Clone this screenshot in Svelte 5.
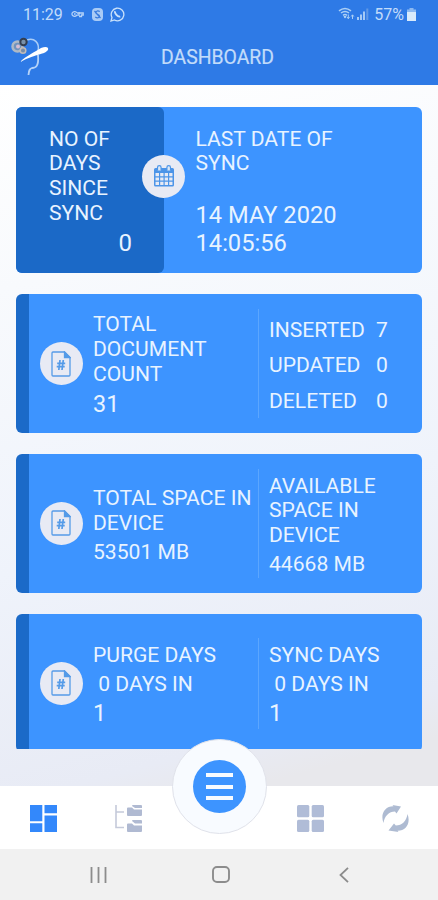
<script>
    const cards = [
        {
            left: { title: ["TOTAL", "DOCUMENT", "COUNT"], big: "31" },
            rows: [
                ["INSERTED", 7],
                ["UPDATED", 0],
                ["DELETED", 0]
            ]
        },
        {
            left: { title: ["TOTAL SPACE IN", "DEVICE"], value: "53501 MB" },
            right: { title: ["AVAILABLE", "SPACE IN", "DEVICE"], value: "44668 MB" }
        },
        {
            left: { title: ["PURGE DAYS"], value: "\u00a00 DAYS IN", big: "1" },
            right: { title: ["SYNC DAYS"], value: "\u00a00 DAYS IN", big: "1" }
        }
    ];
</script>

{#snippet stat(s)}
    <div class="stat">
        {#each s.title as line}
            <div class="line">{line}</div>
        {/each}
        {#if s.value}
            <div class="value">{s.value}</div>
        {/if}
        {#if s.big}
            <div class="big">{s.big}</div>
        {/if}
    </div>
{/snippet}

<div class="phone">
    <header>
        <div class="status">
            <span class="time">11:29</span>
            <!-- vpn key -->
            <svg width="13" height="8" viewBox="0 0 13 8" fill="none" stroke="#b5d3f8" stroke-width="1.3">
                <path d="M5.8 2.8A2.6 2.4 0 1 0 5.8 5.2H8V3H12.2V5H10.5V6.5H8" />
                <path d="M3 4h1.6M6 3h3" />
            </svg>
            <svg class="shield" width="13" height="15" viewBox="0 0 13 15">
                <rect x="1" y="1" width="11" height="13" rx="4" fill="#a9cbf6" />
                <path d="M8.8 4.5C6 3 4 5 5.2 6.5l2.8 1.7C9.5 10 7 11.8 4.2 10M3.5 4l6 7" fill="none" stroke="#3679dd" stroke-width="1.2" />
            </svg>
            <svg class="chat" width="15" height="15" viewBox="0 0 15 15" fill="none" stroke="#c9e1fb">
                <path d="M1 14l1-3.5A6.3 6.3 0 1 1 4.5 13z" stroke-width="1.3" />
                <path d="M5.2 4.2c-1 1.600 2.600 6.300 5 5.200" stroke-width="1.9" />
            </svg>
            <span class="right">
                <svg width="17" height="14" viewBox="0 0 17 14" fill="none" stroke="#acd0f5" stroke-width="1.5">
                    <path d="M1 3.8Q7 -1 13 3.800M3 6Q7 3 11 6M5 8.300Q7 6.800 9 8.300" />
                    <path d="M6 9.500h2l-1 1.600zM10.300 11.500V7.500M9 10l1.300 1.700L11.500 10M14.500 12V8M13.200 9.500l1.300-1.700 1.300 1.700" stroke-width="1" />
                </svg>
                <svg width="12" height="12" viewBox="0 0 12 12">
                    <path d="M0 9h2v3H0zM3 6.500h2V12H3zM6 3.500h2V12H6z" fill="#a5caf5" />
                    <path d="M9.300 0.500h2V12h-2z" fill="#6099e6" />
                </svg>
                <span class="percent">57%</span>
                <svg class="battery" width="9" height="13" viewBox="0 0 9 13">
                    <path d="M2.500 0h4v1.500H9V4H0V1.500h2.500z" fill="#8db9f1" />
                    <path d="M0 4h9v9H0z" fill="#d9eafb" />
                </svg>
            </span>
        </div>
        <div class="titlebar">
            <svg class="logo" width="40" height="40" viewBox="0 0 40 40" fill="none">
                <path d="M16 4C23 1 29 7 27 15" stroke="#a9cdf7" stroke-width="1.5" />
                <path d="M27 19C28 30 25 32 21 32C18 33 18 35 17.500 39" stroke="#b5d3f8" stroke-width="1.8" />
                <path d="M9 26C15 20 24 16 30 12C35 10 38 11 37 14C33 19 27 17 9 26Z" fill="#fff" />
                <circle cx="6.5" cy="10.5" r="5" fill="#7193bd" stroke="#aeb9c6" stroke-width="2.5" />
                <circle cx="7" cy="10.5" r="2" fill="#d9bed2" />
                <circle cx="12.500" cy="6" r="3.2" fill="#7891a9" stroke="#333e50" stroke-width="2" />
                <circle cx="12" cy="14.500" r="2.8" fill="#798da7" stroke="#c3bdb9" stroke-width="1.5" />
            </svg>
            <h1>DASHBOARD</h1>
        </div>
    </header>

    <main>
        <div class="list">
            <section class="sync">
                <div class="days">
                    <div class="line">NO OF</div>
                    <div class="line">DAYS</div>
                    <div class="line">SINCE</div>
                    <div class="line">SYNC</div>
                    <div class="count">0</div>
                    <span class="badge calendar">
                        <svg width="22" height="22" viewBox="0 0 22 22">
                            <path d="M1 4.500a1.500 1.500 0 0 1 1.500-1.500h17A1.500 1.500 0 0 1 21 4.500V20a1.500 1.500 0 0 1-1.500 1.500h-17A1.500 1.500 0 0 1 1 20z" fill="#4c94e8" />
                            <path d="M2.500 8h3.500v3.200H2.500zM7.200 8h3.300v3.200H7.200zM11.700 8h3.300v3.200H11.700zM16.200 8h3.300v3.200H16.200zM2.500 12.400h3.500v3.200H2.500zM7.200 12.400h3.300v3.200H7.200zM11.700 12.400h3.300v3.200H11.700zM16.200 12.400h3.300v3.200H16.200zM2.500 16.800h3.500V20H2.500zM7.200 16.800h3.300V20H7.200zM11.700 16.800h3.300V20H11.700zM16.200 16.800h3.300V20H16.200z" fill="#e8eaf4" />
                            <path d="M4.500 5.500V2.500a1.800 1.800 0 0 1 3.600 0v3M13.900 5.500V2.500a1.800 1.800 0 0 1 3.600 0v3" fill="#dce8f6" stroke="#4c94e8" stroke-width="1.2" />
                        </svg>
                    </span>
                </div>
                <div class="date">
                    <div class="line">LAST DATE OF</div>
                    <div class="line">SYNC</div>
                    <div class="stamp">14 MAY 2020<br />14:05:56</div>
                </div>
            </section>

            {#each cards as card, i}
                <section class="card">
                    <span class="badge">
                        <svg width="20" height="26" viewBox="0 0 20 26" fill="none" stroke="#559be8" stroke-width="1.3">
                            <path d="M2 1H13.500L19 6.500V24a1 1 0 0 1-1 1H2a1 1 0 0 1-1-1V2a1 1 0 0 1 1-1z" />
                            <path d="M13.500 1v5.500H19z" fill="#559be8" />
                            <path d="M9 9L7.800 19M12.300 9L11 19M6.200 12.300h8M5.700 15.700h8" stroke-width="1.7" />
                        </svg>
                    </span>
                    {@render stat(card.left)}
                    <div class="divider" class:short={i === 2}></div>
                    {#if card.rows}
                        <div class="rows">
                            {#each card.rows as [name, n]}
                                <span>{name}</span><span>{n}</span>
                            {/each}
                        </div>
                    {:else}
                        {@render stat(card.right)}
                    {/if}
                </section>
            {/each}
        </div>
    </main>

    <nav>
        <svg width="27" height="27" viewBox="0 0 27 27" fill="#3388fb">
            <path d="M0 0h12.300v16.200H0zM14.500 0H27v8.300H14.500zM0 18.300h12.300V27H0zM14.500 10.500H27V27H14.500z" />
        </svg>
        <svg width="27" height="27" viewBox="0 0 27 27">
            <path d="M1 0v22.500h8M1 7h8" fill="none" stroke="#c5cada" stroke-width="1.6" />
            <path d="M12 3.500a1 1 0 0 1 1-1h4l2 2h8V10a1 1 0 0 1-1 1H13a1 1 0 0 1-1-1zM17 1a1 1 0 0 1 1-1h8a1 1 0 0 1 1 1v2h-7zM12 19.500a1 1 0 0 1 1-1h4l2 2h8V26a1 1 0 0 1-1 1H13a1 1 0 0 1-1-1zM17 16a1 1 0 0 1 1-1h8a1 1 0 0 1 1 1v2.500h-7z" fill="#b0bad2" />
        </svg>
        <button class="fab" aria-label="Menu">
            <span class="inner"><i></i><i></i><i></i></span>
        </button>
        <svg width="27" height="27" viewBox="0 0 27 27" fill="#b0bcd7">
            <rect width="12.3" height="12.3" rx="1.5" />
            <rect x="14.7" width="12.3" height="12.3" rx="1.5" />
            <rect y="14.7" width="12.3" height="12.3" rx="1.5" />
            <rect x="14.7" y="14.7" width="12.3" height="12.3" rx="1.5" />
        </svg>
        <svg width="27" height="27" viewBox="0 0 27 27" fill="#aebbd2">
            <path d="M1.500 18C-2 9 3 1 11.500 1.200L10.500 0L19 1.500L14.500 8.500L13 6.500C7 6.500 2.500 11 1.500 18Z" />
            <path d="M25.500 9C29 18 24 26 15.500 25.800L16.500 27L6.500 25.500L12 18.500L13.800 20.500C20 20.500 24.500 16 25.500 9Z" />
        </svg>
    </nav>

    <footer>
        <svg width="17" height="16" viewBox="0 0 17 16" stroke="#8c8c8c" stroke-width="1.8">
            <path d="M1.500 0v16M8.500 0v16M15.500 0v16" />
        </svg>
        <svg class="home" width="18" height="17" viewBox="0 0 18 17" fill="none" stroke="#8c8c8c" stroke-width="1.9">
            <rect x="1" y="1" width="16" height="15" rx="4" />
        </svg>
        <svg width="10" height="16" viewBox="0 0 10 16" fill="none" stroke="#8c8c8c" stroke-width="1.8">
            <path d="M9 0.800L1.500 8L9 15.200" />
        </svg>
    </footer>
</div>

<style>
    :global(body) {
        margin: 0;
    }
    .phone {
        display: flex;
        flex-direction: column;
        width: 438px;
        height: 900px;
        overflow: hidden;
        font-family: Roboto, sans-serif;
        color: #e8f3ff;
        background: #fff;
    }
    svg {
        display: block;
        flex: none;
    }
    header {
        height: 85px;
        flex: none;
        background: #2e7ae6;
        color: #c2dcfa;
    }
    .status {
        display: flex;
        align-items: center;
        height: 28px;
        padding: 0 22px 0 23px;
        font-size: 16px;
    }
    .time {
        width: 48px;
    }
    .shield {
        margin-left: 7px;
    }
    .chat {
        margin-left: 6px;
    }
    .right {
        display: flex;
        align-items: center;
        margin-left: auto;
    }
    .right svg + svg {
        margin-left: 2px;
    }
    .percent {
        margin: 0 3px 0 5px;
        font-size: 16px;
    }
    .titlebar {
        display: grid;
        grid-template-columns: 1fr auto 1fr;
        align-items: center;
        height: 57px;
    }
    .logo {
        margin: 0 0 3px 11px;
    }
    h1 {
        margin: 1px 3px 0 0;
        font-size: 19.4px;
        font-weight: 400;
        line-height: 57px;
        -webkit-text-stroke: 0.2px #c2dcfa;
    }
    main {
        height: 701px;
        flex: none;
        overflow: hidden;
        background: linear-gradient(165deg, #fff 0%, #f8fafd 25%, #eff3fb 60%, #e8ebf5 88%, #e8e8ec 94%);
    }
    .list {
        display: flex;
        flex-direction: column;
        gap: 21.3px;
        height: 642px;
        padding: 22px 16px 0;
        overflow: hidden;
    }
    .sync {
        display: flex;
        flex: none;
        height: 166px;
        border-radius: 6px;
        background: #3d94ff;
    }
    .days {
        position: relative;
        box-sizing: border-box;
        width: 148px;
        padding: 19.5px 32px 0 33px;
        border-radius: 6px;
        background: #1b69c7;
    }
    .line {
        font-size: 21.1px;
        line-height: 24.7px;
        white-space: nowrap;
    }
    .count {
        font-size: 24px;
        line-height: 28px;
        margin-top: 4px;
        text-align: right;
    }
    .date {
        padding: 19.5px 0 0 31.5px;
    }
    .stamp {
        margin-top: 26.5px;
        font-size: 23.7px;
        line-height: 27.7px;
    }
    .badge {
        display: flex;
        align-items: center;
        justify-content: center;
        flex: none;
        width: 43px;
        height: 43px;
        border-radius: 50%;
        background: #e8eaf4;
    }
    .calendar {
        position: absolute;
        top: 47.5px;
        right: -21px;
    }
    .card {
        display: grid;
        grid-template-columns: 43px 175px 1px 1fr;
        align-items: center;
        flex: none;
        box-sizing: border-box;
        height: 138.5px;
        padding-left: 10.5px;
        border-left: 13px solid #1b6ac8;
        border-radius: 6px;
        background: #3d94ff;
    }
    .stat {
        padding: 3px 0 0 10.5px;
    }
    .divider {
        height: 109px;
        background: #5ba6ff;
    }
    .divider.short {
        height: 91px;
    }
    .value {
        padding-top: 4.5px;
        font-size: 21.1px;
        line-height: 23.5px;
        white-space: nowrap;
    }
    .big {
        padding-top: 3.5px;
        font-size: 23.4px;
        line-height: 28px;
    }
    .rows {
        display: grid;
        grid-template-columns: 107px auto;
        justify-content: start;
        padding: 3px 0 0 10.5px;
        font-size: 21.1px;
        line-height: 35.6px;
    }
    nav {
        display: flex;
        align-items: center;
        justify-content: space-between;
        box-sizing: border-box;
        height: 63px;
        flex: none;
        padding: 2px 29px 0 30px;
        background: #fff;
    }
    .fab {
        position: relative;
        display: flex;
        align-items: center;
        justify-content: center;
        box-sizing: border-box;
        width: 95px;
        height: 95px;
        margin: 0 -28px;
        top: -32px;
        padding: 0;
        border: 1px solid #e0e2ea;
        border-radius: 50%;
        background: #f8fbff;
    }
    .inner {
        display: flex;
        flex-direction: column;
        align-items: center;
        justify-content: center;
        gap: 7.5px;
        width: 53px;
        height: 53px;
        border-radius: 50%;
        background: #3d94ff;
    }
    .inner i {
        width: 27px;
        height: 4px;
        background: #f8fbff;
    }
    footer {
        display: flex;
        align-items: center;
        justify-content: space-between;
        flex: 1;
        padding: 0 89px 0 90px;
        background: #f1f1f1;
    }
    .home {
        margin-right: 4px;
    }
</style>
